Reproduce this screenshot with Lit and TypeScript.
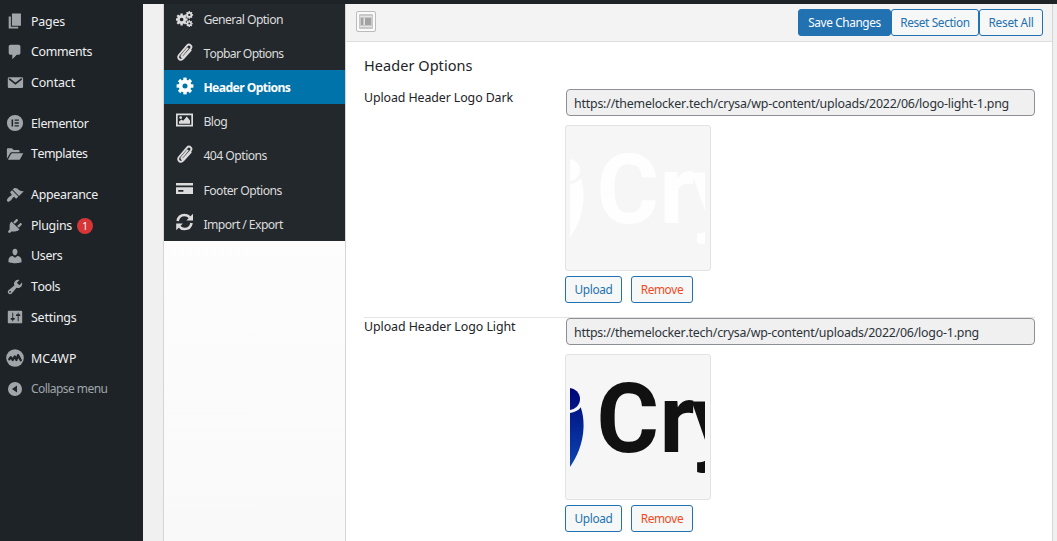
import { LitElement, html, css, svg, nothing } from "lit";
import { customElement, property } from "lit/decorators.js";
import { styleMap } from "lit/directives/style-map.js";

const FAMILY = '"Noto Sans", "Open Sans", sans-serif';
const pen = document.createElement("canvas").getContext("2d")!;

/** A text run whose tracking is computed so that it fills a given width. */
const run = (text: string, width: number, size: number, weight = 400) => {
  pen.font = `${weight} ${size}px ${FAMILY}`;
  pen.fontKerning = "none";
  const gap = (width - pen.measureText(text).width) / text.length;
  return html`<span class="run" style=${styleMap({ letterSpacing: `${gap.toFixed(3)}px` })}>${text}</span>`;
};

const gear = (cx: number, cy: number, r: number, teeth = 8) => svg`
  <g transform="translate(${cx} ${cy})">
    <circle r=${r * 0.53} fill="none" stroke="currentColor" stroke-width=${r * 0.46}></circle>
    ${Array.from({ length: teeth }, (_, i) => svg`
      <rect x=${-r * 0.2} y=${-r} width=${r * 0.4} height=${r * 0.38} fill="currentColor"
        transform="rotate(${(i * 360) / teeth})"></rect>`)}
  </g>`;

const shape = (d: string) => svg`<path fill="currentColor" fill-rule="evenodd" d=${d}></path>`;

const clip = svg`<path fill="none" stroke="currentColor" stroke-width="1.9" stroke-linecap="round"
  d="M11.600 5.400L5.800 12.400c-1 1.300.6 2.600 1.700 1.400L14.800 5.600c2-2.600-1.500-5.600-3.800-3L3 12c-2.600 3.300 1.600 6.600 4.400 3.400L14.600 7.400"></path>`;

const icons: Record<string, unknown> = {
  pages: shape("M6.600 15.200V1.600h10v13.600H6.600zM5.400 16.400h8.200v2H3V5h2.400z"),
  comments: shape("M5 2h9c1.1 0 2 .9 2 2v7c0 1.1-.9 2-2 2h-2l-5 5v-5H5c-1.1 0-2-.9-2-2V4c0-1.1.9-2 2-2z"),
  mail: svg`${shape("M3.500 3.600h14c.8 0 1.500.7 1.500 1.500v9c0 .8-.7 1.500-1.500 1.500h-14c-.8 0-1.500-.7-1.500-1.500v-9c0-.8.7-1.500 1.500-1.500z")}
    <path d="M4 5.600l6.500 5.200L17 5.600" fill="none" stroke="#1d2327" stroke-width="1.700" stroke-linecap="round"></path>`,
  elementor: shape("M10 1a9 9 0 1 0 0 18 9 9 0 0 0 0-18zM6.200 6h1.700v8H6.200zM9.600 6h4.600v1.600H9.600zM9.600 9.200h4.600v1.600H9.600zM9.600 12.400h4.600V14H9.600z"),
  folder: shape("M1 15.200V4.500c0-.6.4-1 1-1h4.500l2 2H14c.6 0 1 .4 1 1V8H6.400c-.8 0-1.300.3-1.700 1zM2.100 16.500L5.600 10c.3-.6.7-.8 1.300-.8h12.300l-3.600 6.500c-.3.6-.7.8-1.300.8z"),
  brush: shape("M14.480 11.060L7.410 3.990l1.500-1.500c.5-.56 2.300-.47 3.510.32 1.210.8 1.430 1.280 2.910 2.100 1.180.64 2.450 1.260 4.450.85zm-.71.71L6.700 4.700 4.930 6.470c-.39.39-.39 1.020 0 1.410l1.060 1.060c.39.39.39 1.030 0 1.420-.6.6-1.430 1.110-2.210 1.690-.35.26-.7.53-1.010.84C1.430 14.230.4 16.080 1.400 17.070c.99 1 2.840-.03 4.180-1.360.31-.31.58-.66.85-1.020.57-.78 1.080-1.610 1.690-2.210.39-.39 1.020-.39 1.410 0l1.060 1.060c.39.39 1.020.39 1.410 0z"),
  plug: shape("M13.110 4.360L9.870 7.600 8 5.730l3.240-3.240c.35-.34 1.050-.2 1.560.32.52.51.66 1.210.31 1.550zm-8 1.770l.91-1.120 9.010 9.010-1.190.84c-.71.71-2.630 1.160-3.820 1.160H6.140L4.900 17.260c-.59.59-1.540.59-2.120 0-.59-.58-.59-1.530 0-2.120l1.240-1.240v-3.880c0-1.130.4-3.190 1.090-3.890zm7.260 3.970l3.240-3.240c.34-.35 1.040-.21 1.550.31.52.51.66 1.210.31 1.550l-3.240 3.250z"),
  user: shape("M10 9.250c-2.270 0-2.730-3.440-2.730-3.440C7 4.020 7.820 2 9.970 2c2.160 0 2.980 2.020 2.710 3.810 0 0-.41 3.440-2.680 3.440zm0 2.570L12.720 10c2.390 0 4.520 2.330 4.520 4.530v2.490s-3.650 1.130-7.240 1.130c-3.650 0-7.240-1.130-7.240-1.130v-2.490c0-2.250 1.940-4.480 4.470-4.480z"),
  wrench: shape("M16.680 9.770c-1.340 1.340-3.300 1.670-4.950.99l-5.410 6.520c-.99.99-2.590.99-3.580 0s-.99-2.590 0-3.570l6.520-5.420c-.68-1.650-.35-3.610.99-4.950 1.280-1.280 3.120-1.620 4.720-1.060l-2.890 2.890 2.820 2.820 2.860-2.870c.53 1.580.18 3.390-1.080 4.650zM3.810 16.210c.4.39 1.040.39 1.430 0 .4-.4.4-1.040 0-1.430-.39-.4-1.030-.4-1.430 0-.39.39-.39 1.030 0 1.430z"),
  sliders: shape("M18 16V4c0-.55-.45-1-1-1H3c-.55 0-1 .45-1 1v12c0 .55.45 1 1 1h14c.55 0 1-.45 1-1zM8 11h1c.55 0 1 .45 1 1s-.45 1-1 1H8v1.500c0 .28-.22.5-.5.5s-.5-.22-.5-.5V13H6c-.55 0-1-.45-1-1s.45-1 1-1h1V5.500c0-.28.22-.5.5-.5s.5.22.5.5V11zm5-2h-1c-.55 0-1-.45-1-1s.45-1 1-1h1V5.500c0-.28.22-.5.5-.5s.5.22.5.5V7h1c.55 0 1 .45 1 1s-.45 1-1 1h-1v5.500c0 .28-.22.5-.5.5s-.5-.22-.5-.5V9z"),
  mc: svg`<circle cx="10" cy="10" r="9.800" fill="currentColor"></circle>
    <path d="M3.600 11.400L5.400 9l2 3.200 2.400-4 1.800 4 1.800-5.400 3 5.800" fill="none" stroke="#1d2327" stroke-width="2.500" stroke-linejoin="round" stroke-linecap="round"></path>`,
  collapse: shape("M10 2.200a7.800 7.800 0 1 0 0 15.600 7.800 7.800 0 0 0 0-15.600zM12.200 6v8L6.700 10z"),
  gears: svg`${gear(5.6, 9.5, 6)}${gear(13.3, 4.9, 3.8)}${gear(13.3, 13.6, 3.4)}`,
  clip,
  gear: gear(9, 9, 8.4),
  picture: shape("M0 2.500h17v13H0zM1.700 4.200v9.600h13.600V4.200zM3 12.800v-2.200l2.500-2.200 1.700 1.400 3.600-4.200 3.200 3.800v3.400zM4.700 5.200a1.400 1.400 0 1 1 0 2.800 1.400 1.400 0 0 1 0-2.800z"),
  card: shape("M0 4h17v2.600H0zM0 8.300h17V15H0zM2.200 11v1.800h5.200V11z"),
  refresh: svg`<path d="M1.600 8C2.400 4 5.400 2 8.500 2c2.200 0 4.100.9 5.300 2.400M15.600 10c-.8 4-3.800 6-6.900 6-2.200 0-4.100-.9-5.300-2.400" fill="none" stroke="currentColor" stroke-width="2.600"></path>
    ${shape("M17 .8V7.600h-6.600zM.2 17.200v-6.800h6.600z")}`,
};

interface Item { icon: string; text: string; width: number; gap?: boolean; badge?: string; muted?: boolean }

const menu: Item[] = [
  { icon: "pages", text: "Pages", width: 34 },
  { icon: "comments", text: "Comments", width: 61 },
  { icon: "mail", text: "Contact", width: 44 },
  { icon: "elementor", text: "Elementor", width: 57.5, gap: true },
  { icon: "folder", text: "Templates", width: 56.5 },
  { icon: "brush", text: "Appearance", width: 67, gap: true },
  { icon: "plug", text: "Plugins", width: 41, badge: "1" },
  { icon: "user", text: "Users", width: 31.5 },
  { icon: "wrench", text: "Tools", width: 29 },
  { icon: "sliders", text: "Settings", width: 45.5 },
  { icon: "mc", text: "MC4WP", width: 45.5, gap: true },
  { icon: "collapse", text: "Collapse menu", width: 76.5, muted: true },
];

const tabs: (Item & { active?: boolean })[] = [
  { icon: "gears", text: "General Option", width: 79.5 },
  { icon: "clip", text: "Topbar Options", width: 80 },
  { icon: "gear", text: "Header Options", width: 87, active: true },
  { icon: "picture", text: "Blog", width: 23.8 },
  { icon: "clip", text: "404 Options", width: 63.5 },
  { icon: "card", text: "Footer Options", width: 78.5 },
  { icon: "refresh", text: "Import / Export", width: 79.5 },
];

@customElement("crysa-logo")
export class CrysaLogo extends LitElement {
  @property({ type: Boolean }) light = false;

  static styles = css`
    :host { display: block; box-sizing: border-box; width: 146px; height: 146px; padding: 4px; border: 1px solid #e2e2e2; border-radius: 3px; background: #f6f6f6; }
    .art { display: block; width: 135px; height: 136px; overflow: hidden; }
    .word { font: 700 95.5px Roboto, sans-serif; font-kerning: none; }
  `;

  render() {
    const mark = this.light ? "#fefefe" : "url(#ink)";
    return html`<svg class="art" viewBox="0 0 135 136">
      <defs><linearGradient id="ink" gradientUnits="userSpaceOnUse" x1="0" y1="30" x2="0" y2="110">
        <stop offset="0" stop-color="#000678"></stop><stop offset="1" stop-color="#0c48b4"></stop>
      </linearGradient></defs>
      <circle cx="-1" cy="40" r="11" fill=${mark}></circle>
      <path fill=${mark} d="M-4 54.200C2 54.200 8 52.500 10.800 48.300C13 55 13.800 62 13.500 69C13 84 7 98 0 108L-4 110z"></path>
      <text class="word" x="26.500 89.500 121.500" y="93" fill=${this.light ? "#fefefe" : "#111"}>Cry</text>
    </svg>`;
  }
}

@customElement("app-root")
export class AppRoot extends LitElement {
  static styles = css`
    :host { display: flex; flex-direction: column; box-sizing: border-box; width: 1057px; height: 541px; overflow: hidden; background: #f0f0f1; color: #1d2327; font-family: "Noto Sans", "Open Sans", sans-serif; font-size: 12.4px; line-height: 1; font-kerning: none; white-space: nowrap; }
    .bar { flex: none; height: 4px; background: #1d2327; }
    .frame { flex: 1; min-height: 0; display: flex; }
    .menu { flex: none; box-sizing: border-box; width: 143px; padding-top: 2px; background: #1d2327; color: #f0f0f1; }
    .item { display: flex; align-items: center; height: 30.65px; padding-left: 6px; gap: 7px; }
    .item .run { padding-top: 1px; }
    .item.gap { margin-top: 10.2px; }
    .item.muted { color: #a0a5aa; font-size: 12px; }
    .icon { flex: none; width: 18px; height: 18px; color: #a0a5aa; }
    .badge { display: grid; place-items: center; width: 16px; height: 16px; margin-left: -2px; border-radius: 50%; background: #d63638; color: #fff; font-size: 10px; }
    .panel { display: flex; width: 888px; margin-left: 20px; border: solid #d5d5d6; border-width: 0 1px; }
    .tabs { flex: none; width: 181px; border-right: 1px solid #d5d5d6; background: linear-gradient(#fdfdfd 40%, #f9f9f9); }
    .tab { display: flex; align-items: center; height: 34.25px; padding-left: 12px; gap: 9.4px; background: #23282d; color: #dcdcdc; font-size: 12.2px; }
    .tab .run { padding-top: 2px; }
    .tab:nth-child(1) { height: 32px; }
    .tab:nth-child(1) .run { padding-top: 0; }
    .tab:nth-child(6) .run { padding-top: 3px; }
    .tab:nth-child(2), .tab:nth-child(3), .tab:nth-child(4) { height: 34px; }
    .tab.active { background: #0073aa; color: #fff; font-weight: 700; }
    .tab .icon { color: inherit; margin-top: -3px; }
    .main { flex: 1; display: flex; flex-direction: column; background: #fff; }
    .tools { display: flex; align-items: center; box-sizing: border-box; height: 38px; padding: 0 9px 0 10px; border-bottom: 1px solid #dedede; background: #f3f3f3; }
    .expand { display: grid; place-items: center; box-sizing: border-box; width: 20px; height: 21px; margin: -2px auto 0 0; border: 1px solid #bcbcbc; border-radius: 2px; background: #fafafa; }
    .btn { display: flex; align-items: center; justify-content: center; box-sizing: border-box; height: 27px; border: 1px solid #2271b1; border-radius: 3px; background: #f6f7f7; color: #2271b1; font-size: 11.8px; padding-top: 1px; }
    .tools .btn { margin-top: -1px; }
    .primary { background: #2271b1; color: #fff; width: 93px; }
    .section { width: 88px; }
    .all { width: 64px; }
    .upload { width: 57px; }
    .remove { width: 62px; color: #f04a1d; }
    .body { display: flex; flex-direction: column; padding: 0 17px 0 18px; }
    .title { height: 47px; line-height: 47px; font-size: 14.5px; }
    .field { display: flex; }
    .field + .field { margin-top: 14px; border-top: 1px solid #e4e4e4; }
    .label { width: 201px; line-height: 17px; }
    .control { flex: 1; display: flex; flex-direction: column; }
    .url { display: flex; align-items: center; box-sizing: border-box; height: 27px; margin-left: 1px; padding: 3px 7px 0; border: 1px solid #8c8f94; border-radius: 4px; background: #f0f0f1; color: #2c3338; }
    .preview { margin-top: 9px; }
    .actions { display: flex; gap: 9px; margin-top: 5px; }
  `;

  private field(label: string, labelWidth: number, url: string, urlWidth: number, light: boolean) {
    return html`<div class="field">
      <div class="label">${run(label, labelWidth, 12.4)}</div>
      <div class="control">
        <div class="url">${run(url, urlWidth, 12.4)}</div>
        <crysa-logo class="preview" ?light=${light}></crysa-logo>
        <div class="actions">
          <div class="btn upload">${run("Upload", 38, 11.8)}</div>
          <div class="btn remove">${run("Remove", 42.5, 11.8)}</div>
        </div>
      </div>
    </div>`;
  }

  render() {
    return html`
      <div class="bar"></div>
      <div class="frame">
        <nav class="menu">${menu.map((m) => html`
          <div class="item ${m.gap ? "gap" : ""} ${m.muted ? "muted" : ""}">
            <svg class="icon" viewBox="0 0 20 20">${icons[m.icon]}</svg>
            ${run(m.text, m.width, m.muted ? 12 : 12.4)}
            ${m.badge ? html`<span class="badge">${m.badge}</span>` : nothing}
          </div>`)}
        </nav>
        <div class="panel">
          <div class="tabs">${tabs.map((t) => html`
            <div class="tab ${t.active ? "active" : ""}">
              <svg class="icon" viewBox="0 0 18 18">${icons[t.icon]}</svg>
              ${run(t.text, t.width, 12.2, t.active ? 700 : 400)}
            </div>`)}
          </div>
          <div class="main">
            <div class="tools">
              <div class="expand"><svg width="14" height="15" viewBox="0 0 14 15">
                <rect width="14" height="15" rx="1" fill="#c8c8c8"></rect>
                <path d="M1 2.500h12M1 12.500h12" stroke="#e4e4e4"></path>
                <rect x="2" y="4" width="2.500" height="7" fill="#a2a2a2"></rect>
                <rect x="6" y="4" width="6" height="7" fill="#a2a2a2"></rect>
                <path d="M5.200 4v7" stroke="#eee"></path>
              </svg></div>
              <div class="btn primary">${run("Save Changes", 72.5, 11.8)}</div>
              <div class="btn section">${run("Reset Section", 69.5, 11.8)}</div>
              <div class="btn all">${run("Reset All", 45, 11.8)}</div>
            </div>
            <div class="body">
              <div class="title">${run("Header Options", 108.5, 14.5)}</div>
              ${this.field("Upload Header Logo Dark", 149, "https://themelocker.tech/crysa/wp-content/uploads/2022/06/logo-light-1.png", 435, true)}
              ${this.field("Upload Header Logo Light", 151.5, "https://themelocker.tech/crysa/wp-content/uploads/2022/06/logo-1.png", 405, false)}
            </div>
          </div>
        </div>
      </div>`;
  }
}
